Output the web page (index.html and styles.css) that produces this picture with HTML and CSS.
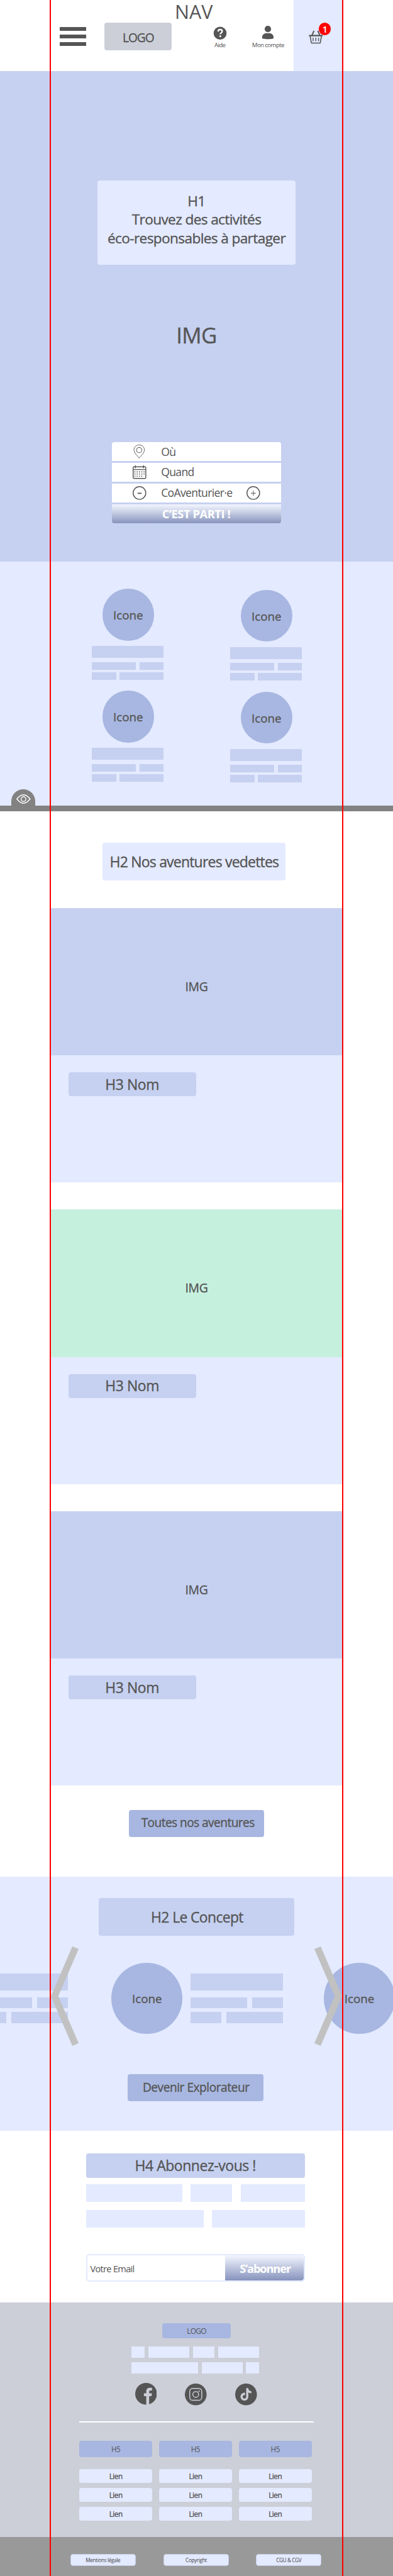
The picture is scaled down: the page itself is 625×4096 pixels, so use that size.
FILE: index.html
```html
<!DOCTYPE html>
<html lang="fr">
<head>
<meta charset="utf-8">
<title>Accueil</title>
<link rel="stylesheet" href="styles.css">
</head>
<body>
<div class="page">
  <header class="header">
    <div class="header-main">
      <div class="header-title">NAV</div>
      <div class="header-row">
        <div class="burger"><span></span><span></span><span></span></div>
        <div class="logo">LOGO</div>
        <div class="tool tool-help">
          <svg class="tool-icon" viewBox="0 0 22 22"><circle cx="11" cy="11.7" r="10.3" fill="#555"/><path d="M7.9 9.2C7.9 7.1 9.3 6 11.2 6s3.2 1.1 3.2 2.8c0 2.3-3 2.4-3 4.6" fill="none" stroke="#fff" stroke-width="2.3"/><circle cx="11.3" cy="16.5" r="1.5" fill="#fff"/></svg>
          <span>Aide</span>
        </div>
        <div class="tool tool-account">
          <svg class="tool-icon" viewBox="0 0 22 22"><circle cx="11" cy="5.2" r="5.1" fill="#555"/><path d="M1.8 19.2c0-4.6 3-7.4 7-7.4h4.4c4 0 7 2.8 7 7.4 0 1.2-3.4 2-9.2 2s-9.2-.8-9.2-2z" fill="#555"/></svg>
          <span>Mon compte</span>
        </div>
      </div>
    </div>
    <div class="cart">
      <svg class="cart-icon" viewBox="0 0 78 74" fill="none" stroke="#555"><path d="M29 3 18 28M50 3l11 25" stroke-width="7"/><path d="M1 30h76" stroke-width="8"/><path d="m8 34 6 34q.6 3.500 4 3.500h42q3.400 0 4-3.500l6-34" stroke-width="5.500"/><path d="M24 42v19M39 42v19M54 42v19" stroke-width="5"/></svg>
      <span class="cart-badge">1</span>
    </div>
  </header>

  <section class="hero">
    <h1 class="hero-title">H1<br>Trouvez des activités<br>éco-responsables à partager</h1>
    <div class="hero-image-label">IMG</div>
    <div class="search">
      <div class="search-row">
        <svg class="search-icon" viewBox="0 0 75 75" fill="none" stroke="#555"><path d="M36 74C24 59 7.500 46 7.500 29C7.500 13 20 1.500 36 1.500S64.500 13 64.500 29C64.500 46 48 59 36 74z" stroke-width="3.200"/><circle cx="36" cy="30" r="14.500" stroke-width="3.500"/></svg>
        <span>Où</span>
      </div>
      <div class="search-row">
        <svg class="search-icon" viewBox="0 0 75 75" fill="none" stroke="#555"><rect x="2.500" y="8" width="70" height="64" rx="5" stroke-width="5"/><path d="M2 23h71" stroke-width="4.500"/><path d="M15 0v16M60 0v16" stroke-width="5"/><path d="M9.500 36h57M9.500 48h57M9.500 60h44" stroke-width="5.500" stroke-dasharray="5.500 7.200"/></svg>
        <span>Quand</span>
      </div>
      <div class="search-row">
        <svg class="search-icon" viewBox="0 0 75 75" fill="none" stroke="#555"><circle cx="37.500" cy="37.500" r="35" stroke-width="5"/><path d="M27 39.500h22" stroke-width="6"/></svg>
        <span class="search-people">CoAventurier·e</span>
        <svg class="search-plus" viewBox="0 0 75 75" fill="none" stroke="#555"><circle cx="37.500" cy="37.500" r="35" stroke-width="5"/><path d="M24 39h28M38 25v28" stroke-width="3.500"/></svg>
      </div>
      <div class="search-row search-submit">C’EST PARTI !</div>
    </div>
  </section>

  <section class="features">
    <div class="feature-column">
      <div class="feature"><div class="disc">Icone</div><div class="lines"><i></i><i></i><i></i><i></i><i></i></div></div>
      <div class="feature"><div class="disc">Icone</div><div class="lines"><i></i><i></i><i></i><i></i><i></i></div></div>
    </div>
    <div class="feature-column feature-column-right">
      <div class="feature"><div class="disc">Icone</div><div class="lines"><i></i><i></i><i></i><i></i><i></i></div></div>
      <div class="feature"><div class="disc">Icone</div><div class="lines"><i></i><i></i><i></i><i></i><i></i></div></div>
    </div>
    <div class="fold-tab">
      <svg class="fold-eye" viewBox="0 0 57 38" fill="none" stroke="#fff"><path d="M2 19C11 8 18 2 28.500 2S46 8 55 19C46 30 39 36 28.500 36S11 30 2 19z" stroke-width="3.600"/><circle cx="28.500" cy="19" r="9.500" stroke-width="3.400"/></svg>
    </div>
  </section>
  <div class="fold"></div>

  <section class="products">
    <h2 class="products-title">H2 Nos aventures vedettes</h2>
    <article class="product"><div class="product-image">IMG</div><h3 class="product-name">H3 Nom</h3></article>
    <article class="product product-green"><div class="product-image">IMG</div><h3 class="product-name">H3 Nom</h3></article>
    <article class="product"><div class="product-image">IMG</div><h3 class="product-name">H3 Nom</h3></article>
    <div class="button button-all">Toutes nos aventures</div>
  </section>

  <section class="concept">
    <h2 class="concept-title">H2 Le Concept</h2>
    <div class="slider">
      <div class="slide-lines slide-lines-first"><i></i><i></i><i></i><i></i><i></i></div>
      <div class="disc disc-large">Icone</div>
      <div class="slide-lines"><i></i><i></i><i></i><i></i><i></i></div>
      <div class="disc disc-large disc-last">Icone</div>
      <svg class="arrow arrow-previous" viewBox="0 0 44 158"><path d="M34 0 44 4.100 11.700 79 44 153.700 34 158 0 79z" fill="#c1c1c1"/></svg>
      <svg class="arrow arrow-next" viewBox="0 0 44 158"><path d="M10 0 0 4.100 32.300 79 0 153.700 10 158 44 79z" fill="#c1c1c1"/></svg>
    </div>
    <div class="button button-explore">Devenir Explorateur</div>
  </section>

  <section class="newsletter">
    <h4 class="newsletter-title">H4 Abonnez-vous !</h4>
    <div class="text-row text-row-three"><i></i><i></i><i></i></div>
    <div class="text-row text-row-two"><i></i><i></i></div>
    <div class="subscribe"><span class="subscribe-field">Votre Email</span><span class="subscribe-button">S’abonner</span></div>
  </section>

  <footer class="footer">
    <div class="footer-logo">LOGO</div>
    <div class="about about-first"><i></i><i></i><i></i><i></i></div>
    <div class="about about-second"><i></i><i></i><i></i></div>
    <div class="social">
      <svg class="social-icon social-facebook" viewBox="0 0 120 120"><circle cx="60" cy="60" r="60" fill="#555"/><path d="M61 121V73H48V57H61V47C61 34 69 27 82 27H93V42H85C79 42 77 45 77 50V57H92L90 73H77V121Z" fill="#cccfd8"/></svg>
      <svg class="social-icon" viewBox="0 0 120 120"><circle cx="60" cy="60" r="60" fill="#555"/><g fill="none" stroke="#cccfd8" stroke-width="5"><rect x="27" y="27" width="66" height="65" rx="16"/><circle cx="60" cy="60" r="16"/></g><circle cx="78" cy="42" r="4" fill="#cccfd8"/></svg>
      <svg class="social-icon" viewBox="0 0 120 120"><circle cx="60" cy="60" r="60" fill="#555"/><path transform="translate(25 25) scale(2.87)" fill="#cccfd8" d="M12.525.02c1.310-.02 2.610-.01 3.910-.02.08 1.530.63 3.090 1.750 4.170 1.120 1.110 2.700 1.620 4.240 1.790v4.030c-1.440-.05-2.890-.35-4.200-.97-.57-.26-1.100-.59-1.620-.93-.01 2.920.01 5.840-.02 8.750-.08 1.400-.54 2.790-1.350 3.940-1.310 1.920-3.580 3.170-5.910 3.210-1.430.08-2.860-.31-4.080-1.030-2.020-1.190-3.440-3.370-3.650-5.710-.02-.5-.03-1-.01-1.490.18-1.900 1.120-3.720 2.580-4.960 1.660-1.440 3.980-2.130 6.150-1.720.02 1.480-.04 2.960-.04 4.440-.99-.32-2.150-.23-3.020.37-.63.41-1.110 1.040-1.360 1.750-.21.51-.15 1.070-.14 1.610.24 1.640 1.820 3.020 3.500 2.870 1.120-.01 2.190-.66 2.770-1.610.19-.33.4-.67.41-1.060.1-1.790.06-3.570.07-5.360.01-4.030-.01-8.050.02-12.070z"/></svg>
    </div>
    <div class="rule"></div>
    <div class="sitemap">
      <div class="sitemap-column"><h5>H5</h5><a>Lien</a><a>Lien</a><a>Lien</a></div>
      <div class="sitemap-column"><h5>H5</h5><a>Lien</a><a>Lien</a><a>Lien</a></div>
      <div class="sitemap-column"><h5>H5</h5><a>Lien</a><a>Lien</a><a>Lien</a></div>
    </div>
  </footer>
  <div class="legal"><a>Mentions légale</a><a>Copyright</a><a class="legal-terms">CGU &amp; CGV</a></div>
  <div class="guides"></div>
</div>
</body>
</html>
```
FILE: styles.css
```css
* { box-sizing: border-box; }
html, body { margin: 0; }
body { font-family: "Open Sans", "Noto Sans", sans-serif; color: #555; background: #fff; }
h1, h2, h3, h4, h5 { margin: 0; font-weight: 400; }
h1, h2, h3, h4, .disc, .button, .product-image, .hero-image-label, .logo { -webkit-text-stroke: .35px currentColor; }
i { display: block; background: #c6d1f1; }
svg { display: block; overflow: visible; }
.page { position: relative; width: 625px; height: 4096px; overflow: hidden; }

/* Layout margins drawn over the whole page */
.guides { position: absolute; top: 0; bottom: 0; left: 79px; width: 467px; border: solid #f00; border-width: 0 2px; pointer-events: none; }

.header { display: flex; height: 112.500px; }
.header-main { width: 466.800px; }
.header-title { height: 36.400px; padding-left: 278px; font-size: 30.500px; line-height: 36.400px; }
.header-row { display: flex; align-items: flex-start; padding-left: 95.300px; }
.burger { display: flex; flex-direction: column; gap: 6.100px; width: 42.200px; padding-top: 6.900px; }
.burger span { height: 6px; background: #555; }
.logo { display: flex; align-items: center; justify-content: center; width: 107.200px; height: 43.300px; margin-left: 28.700px; padding-top: 2px; border-radius: 4px; background: #cccfd8; font-size: 19.200px; letter-spacing: -1.100px; }
.tool { display: flex; flex-direction: column; align-items: center; gap: 2.400px; padding-top: 5.100px; font-size: 9.700px; line-height: 12px; letter-spacing: -.62px; white-space: nowrap; }
.tool-icon { width: 22px; height: 22px; }
.tool-help { width: 22px; margin-left: 65.300px; }
.tool-account { width: 54px; margin-left: 38.700px; }
.cart { position: relative; width: 78.500px; padding: 48px 0 0 24.200px; background: #e4eaff; }
.cart-icon { width: 22.500px; height: 21.300px; }
.cart-badge { position: absolute; top: 36.400px; left: 40.200px; width: 19.500px; height: 19.900px; border-radius: 50%; background: #f00; color: #fff; font-size: 15px; font-weight: 600; line-height: 20px; text-align: center; }

.hero { display: flex; flex-direction: column; align-items: center; height: 780.800px; padding-top: 174px; background: #c6d1f1; }
.hero-title { width: 314.100px; height: 134.200px; padding-top: 18.500px; border-radius: 4px; background: #e4eaff; font-size: 22.700px; line-height: 29.300px; letter-spacing: -.65px; text-align: center; }
.hero-image-label { height: 48px; margin-top: 88px; font-size: 34.800px; line-height: 48px; letter-spacing: -.6px; }
.search { display: flex; flex-direction: column; gap: 2.600px; width: 268.700px; margin-top: 146.200px; border-radius: 4px; overflow: hidden; }
.search-row { display: flex; align-items: center; height: 30.300px; padding: 0 0 1px 33px; background: #fff; font-size: 17.600px; letter-spacing: -.66px; }
.search-icon, .search-plus { flex: none; width: 21.600px; height: 21.600px; margin-right: 23.400px; }
.search-people { width: 135.600px; }
.search-submit { justify-content: center; padding: 0 1px 1px 0; background: linear-gradient(#f3f6ff, #c4cce2 45%, #8793bd); color: #fff; font-size: 18.300px; font-weight: 700; letter-spacing: -.42px; }

.features { position: relative; display: flex; gap: 106.400px; height: 387.900px; padding: 43.200px 0 0 146.300px; background: #e4eaff; }
.feature-column { width: 113.600px; }
.feature-column-right { padding-top: 1.700px; }
.feature { height: 161.900px; }
.disc { display: flex; align-items: center; justify-content: center; width: 82.300px; height: 82.300px; margin-left: 16.300px; padding-top: 1px; border-radius: 50%; background: #a8b7e1; font-size: 18.800px; }
.lines { display: flex; flex-wrap: wrap; column-gap: 5.900px; margin-top: 8.700px; }
.lines i { height: 11.900px; margin-bottom: 4.100px; }
.lines i:nth-child(1) { width: 113.600px; height: 18.900px; margin-bottom: 6.400px; }
.lines i:nth-child(2), .lines i:nth-child(5) { width: 69.400px; }
.lines i:nth-child(3), .lines i:nth-child(4) { width: 38.300px; }
.fold-tab { position: absolute; left: 18.300px; bottom: 0; width: 37.900px; height: 26.200px; padding: 8.300px 7.600px 0; border-radius: 19px 19px 0 0; background: #828282; }
.fold-eye { width: 22.700px; height: 15.100px; }
.fold { height: 8.600px; background: #828282; }

.products { display: flex; flex-direction: column; align-items: center; height: 1693.900px; padding-top: 50.200px; }
.products-title { display: flex; align-items: center; justify-content: center; width: 291px; height: 59.700px; margin: 0 7.200px 44.200px 0; border-radius: 4px; background: #e4eaff; font-size: 23px; letter-spacing: -.8px; white-space: nowrap; }
.product { flex: none; width: 464.500px; height: 436.200px; margin-bottom: 43.300px; border-radius: 2px; overflow: hidden; background: #e4eaff; }
.product-image { display: flex; align-items: center; justify-content: center; height: 234.500px; padding-top: 14px; background: #c6d1f1; font-size: 19.400px; letter-spacing: -.3px; }
.product-green .product-image { background: #c6f0de; }
.product-name { display: flex; align-items: center; justify-content: center; width: 202.800px; height: 38.200px; margin: 26.700px 0 0 28.500px; border-radius: 4px; background: #c6d1f1; font-size: 22.900px; letter-spacing: -.4px; }
.button { display: flex; flex: none; align-items: center; justify-content: center; height: 43.400px; border-radius: 4px; background: #a8b7e1; font-size: 19.100px; letter-spacing: -.56px; white-space: nowrap; }
.button-all { width: 215.200px; margin-top: -4.500px; padding: 0 0 3.400px 4.400px; }

.concept { display: flex; flex-direction: column; align-items: center; height: 404.300px; padding-top: 34.500px; background: #e4eaff; }
.concept-title { display: flex; align-items: center; justify-content: center; width: 311.700px; height: 60px; padding-left: 2px; border-radius: 4px; background: #c6d1f1; font-size: 22.900px; letter-spacing: -.62px; }
.slider { position: relative; display: flex; width: 625px; height: 158px; margin: 16.900px 0 44.800px; padding-top: 26px; overflow: hidden; }
.slide-lines { display: flex; flex: none; flex-wrap: wrap; align-content: flex-start; column-gap: 7.900px; width: 147.100px; margin: 16.800px 65px 0 12.800px; }
.slide-lines i { height: 17.300px; margin-bottom: 6.200px; }
.slide-lines i:nth-child(1) { width: 147.100px; height: 27.500px; margin-bottom: 10.400px; }
.slide-lines i:nth-child(2), .slide-lines i:nth-child(5) { width: 90px; }
.slide-lines i:nth-child(3), .slide-lines i:nth-child(4) { width: 49.200px; }
.slide-lines-first { margin: 16.800px 69.300px 0 -39px; }
.disc-large { flex: none; width: 112.800px; height: 112.800px; margin: 0; padding-top: 2px; }
.arrow { position: absolute; top: 0; width: 44px; height: 158px; }
.arrow-previous { left: 80.800px; }
.arrow-next { left: 500.400px; }
.button-explore { width: 216.400px; margin-right: 3.600px; padding: 0 0 1px 2px; letter-spacing: -.45px; }

.newsletter { height: 273.500px; padding: 35.600px 0 0 136.700px; }
.newsletter-title { display: flex; align-items: center; justify-content: center; width: 348px; height: 39px; border-radius: 4px; background: #c6d1f1; font-size: 23px; letter-spacing: -.46px; }
.text-row { display: flex; justify-content: space-between; width: 348px; height: 28.500px; margin-top: 12.100px; }
.text-row-three { margin-top: 10.400px; }
.text-row i { background: #e4eaff; }
.text-row-three i:nth-child(1) { width: 153.500px; }
.text-row-three i:nth-child(2) { width: 65.800px; margin-right: 1.500px; }
.text-row-three i:nth-child(3) { width: 101.200px; }
.text-row-two i:nth-child(1) { width: 186.900px; }
.text-row-two i:nth-child(2) { width: 147.900px; }
.subscribe { display: flex; width: 347.200px; height: 43.300px; margin: 42.400px 0 0 .8px; border: 2px solid #e4eaff; border-radius: 5px; overflow: hidden; }
.subscribe-field { display: flex; align-items: center; width: 218.200px; padding: 2px 0 0 4px; border-radius: 4px 0 0 4px; font-size: 14.600px; letter-spacing: -.7px; }
.subscribe-button { display: flex; flex: 1; align-items: center; justify-content: center; padding-left: 3px; border-radius: 0 4px 4px 0; background: linear-gradient(#f3f6ff, #8793bd); color: #fff; font-size: 18.300px; font-weight: 700; letter-spacing: -1.150px; }

.footer { display: flex; flex-direction: column; align-items: center; height: 372.300px; padding-top: 33px; background: #cccfd8; }
.footer-logo { display: flex; align-items: center; justify-content: center; width: 108.400px; height: 23.400px; margin-bottom: 13px; border-radius: 4px; background: #a8b7e1; font-size: 12px; letter-spacing: -.8px; }
.about { display: flex; justify-content: space-between; width: 203.700px; height: 18.200px; margin: 0 4px 6.900px 0; }
.about i { background: #e4eaff; }
.about-first i:nth-child(1), .about-second i:nth-child(3) { width: 21px; }
.about-first i:nth-child(2), .about-first i:nth-child(4) { width: 65px; }
.about-first i:nth-child(3) { width: 34.700px; }
.about-second i:nth-child(1) { width: 106.800px; }
.about-second i:nth-child(2) { width: 64.700px; }
.social { display: flex; gap: 45px; margin: 8.700px 2px 26px 0; }
.social-icon { width: 34.600px; height: 34.600px; }
.social-facebook { margin-top: -.8px; overflow: hidden; }
.rule { flex: none; width: 373.900px; height: 1.800px; background: #fff; }
.sitemap { display: flex; gap: 10.700px; margin: 29.400px 3.200px 0 0; }
.sitemap-column { width: 116.100px; font-size: 11.700px; }
.sitemap-column h5, .sitemap-column a { display: flex; align-items: center; justify-content: center; border-radius: 4px; font-size: 11.700px; letter-spacing: -.45px; }
.sitemap-column h5 { height: 26px; margin-bottom: 19px; background: #a8b7e1; }
.sitemap-column a { height: 21.600px; margin-bottom: 8.300px; background: #e4eaff; color: #444; -webkit-text-stroke: .2px currentColor; }

.legal { display: flex; gap: 44.600px; height: 62.300px; padding: 27.600px 0 0 112px; background: #999; }
.legal a { display: flex; align-items: center; justify-content: center; width: 103.600px; height: 18.300px; border: 1px solid #c4cde6; border-radius: 4px; background: #e4eaff; font-size: 8.200px; letter-spacing: -.36px; color: #444; }
.legal-terms { margin-left: -1px; }
```
